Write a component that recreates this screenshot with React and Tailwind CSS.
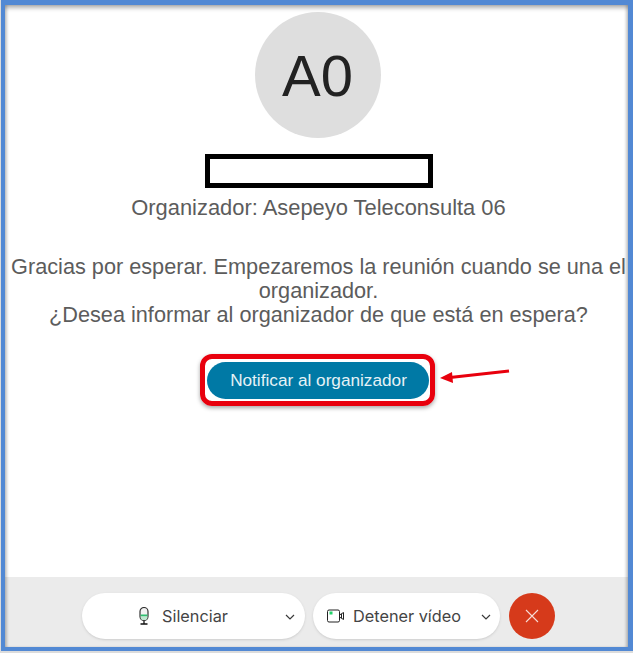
const font = { fontFamily: 'Inter, "Liberation Sans", sans-serif' }

function Chevron() {
  return (
    <svg width="10" height="6" viewBox="0 0 10 6" fill="none" stroke="#3a3a3a" strokeWidth="1.2">
      <path d="M1 1l4 4 4-4" />
    </svg>
  )
}

function MicIcon() {
  return (
    <svg width="12" height="18" viewBox="0 0 12 18" fill="none">
      <rect x="2" y="0.5" width="8" height="13" rx="4" fill="#f2f2f2" stroke="#333" strokeWidth="1.2" />
      <path d="M2.6 7.5h6.8v2H2.6z" fill="#2fbf70" />
      <path d="M2.7 9.5h6.6v1.5a3.3 2 0 0 1-6.6 0z" fill="#bfe8d0" />
      <path d="M6 14v2.5M2.5 17h7" stroke="#111" strokeWidth="1.3" />
    </svg>
  )
}

function VideoIcon() {
  return (
    <svg width="18" height="14" viewBox="0 0 18 14" fill="none">
      <rect x="0.5" y="1" width="12" height="12" rx="1.5" stroke="#222" strokeWidth="1" />
      <path d="M12.5 6l4-2.5v7l-4-2.5" stroke="#222" strokeWidth="1" />
      <path d="M14.5 5v4" stroke="#222" strokeWidth="1" />
      <rect x="2.5" y="2.5" width="3" height="3" fill="#22d36a" />
    </svg>
  )
}

export default function App() {
  return (
    <div className="relative w-[633px] h-[653px] bg-white flex flex-col overflow-hidden text-[#4a4a4a]" style={font}>
      <main className="flex-1 flex flex-col items-center pl-[8px] pr-[6px] pt-[12px] font-['Liberation_Sans'] text-[#5c5c5c]">
        <div className="w-[126px] h-[126px] rounded-full bg-[#dedede] flex items-center justify-center text-[58px] text-[#222]">
          A0
        </div>
        <div className="mt-[16px] ml-[3px] w-[228px] h-[34px] border-[5px] border-black bg-white" />
        <p className="mt-[6px] ml-[2px] text-[21.9px] leading-[28px] whitespace-nowrap">
          Organizador: Asepeyo Teleconsulta 06
        </p>
        <p className="mt-[33px] ml-[2px] text-center text-[21.7px] leading-[24px] whitespace-nowrap">
          Gracias por esperar. Empezaremos la reunión cuando se una el
          <br />
          organizador.
          <br />
          ¿Desea informar al organizador de que está en espera?
        </p>
        <div className="mt-[27px] w-[235px] h-[52px] rounded-[12px] border-[5px] border-[#e8000d] flex items-center justify-center shadow-[0_2px_4px_rgba(0,0,0,0.35)]">
          <button className="w-[222px] h-[37px] shrink-0 rounded-full bg-[#0079a5] pl-[2px] pt-[1px] text-[#e6f2f6] text-[17.2px]">
            Notificar al organizador
          </button>
        </div>
      </main>

      <footer className="h-[70px] mb-[6px] mx-[5px] bg-[#ebebeb] flex items-start justify-center pt-[16px] pl-[4px]">
        <button className="relative w-[223px] h-[46px] rounded-full bg-white shadow-sm flex items-center pl-[56px] gap-[12px] text-[16.3px] text-[#444]">
          <MicIcon />
          <span>Silenciar</span>
          <span className="absolute right-[10px] top-[21px] flex"><Chevron /></span>
        </button>
        <button className="relative ml-[8px] w-[187px] h-[46px] rounded-full bg-white shadow-sm flex items-center pl-[14px] gap-[8px] text-[16.3px] text-[#444]">
          <VideoIcon />
          <span>Detener vídeo</span>
          <span className="absolute right-[9px] top-[21px] flex"><Chevron /></span>
        </button>
        <button className="ml-[9px] w-[46px] h-[46px] rounded-full bg-[#d63a1b] flex items-center justify-center">
          <svg width="14" height="14" viewBox="0 0 14 14" stroke="#f7dcd5" strokeWidth="1.1"><path d="M1 1l12 12M13 1L1 13" /></svg>
        </button>
      </footer>

      {/* screenshot frame */}
      <div className="absolute left-[1px] top-0 right-0 bottom-[2px] border-[4px] border-t-[5px] border-r-[5px] border-[#5289d4] pointer-events-none shadow-[0_0_0_3px_#dcdcdc,inset_0_4px_4px_-1px_rgba(0,0,0,0.3),inset_3px_0_3px_-1px_rgba(0,0,0,0.18),inset_-3px_0_3px_-1px_rgba(0,0,0,0.18)]" />

      {/* annotation arrow */}
      <svg className="absolute left-[436px] top-[365px]" width="78" height="22" viewBox="0 0 78 22">
        <path d="M73 6L14 12.5" stroke="#e8000d" strokeWidth="3" />
        <path d="M4 13l12-6 1 11z" fill="#e8000d" />
      </svg>
    </div>
  )
}
